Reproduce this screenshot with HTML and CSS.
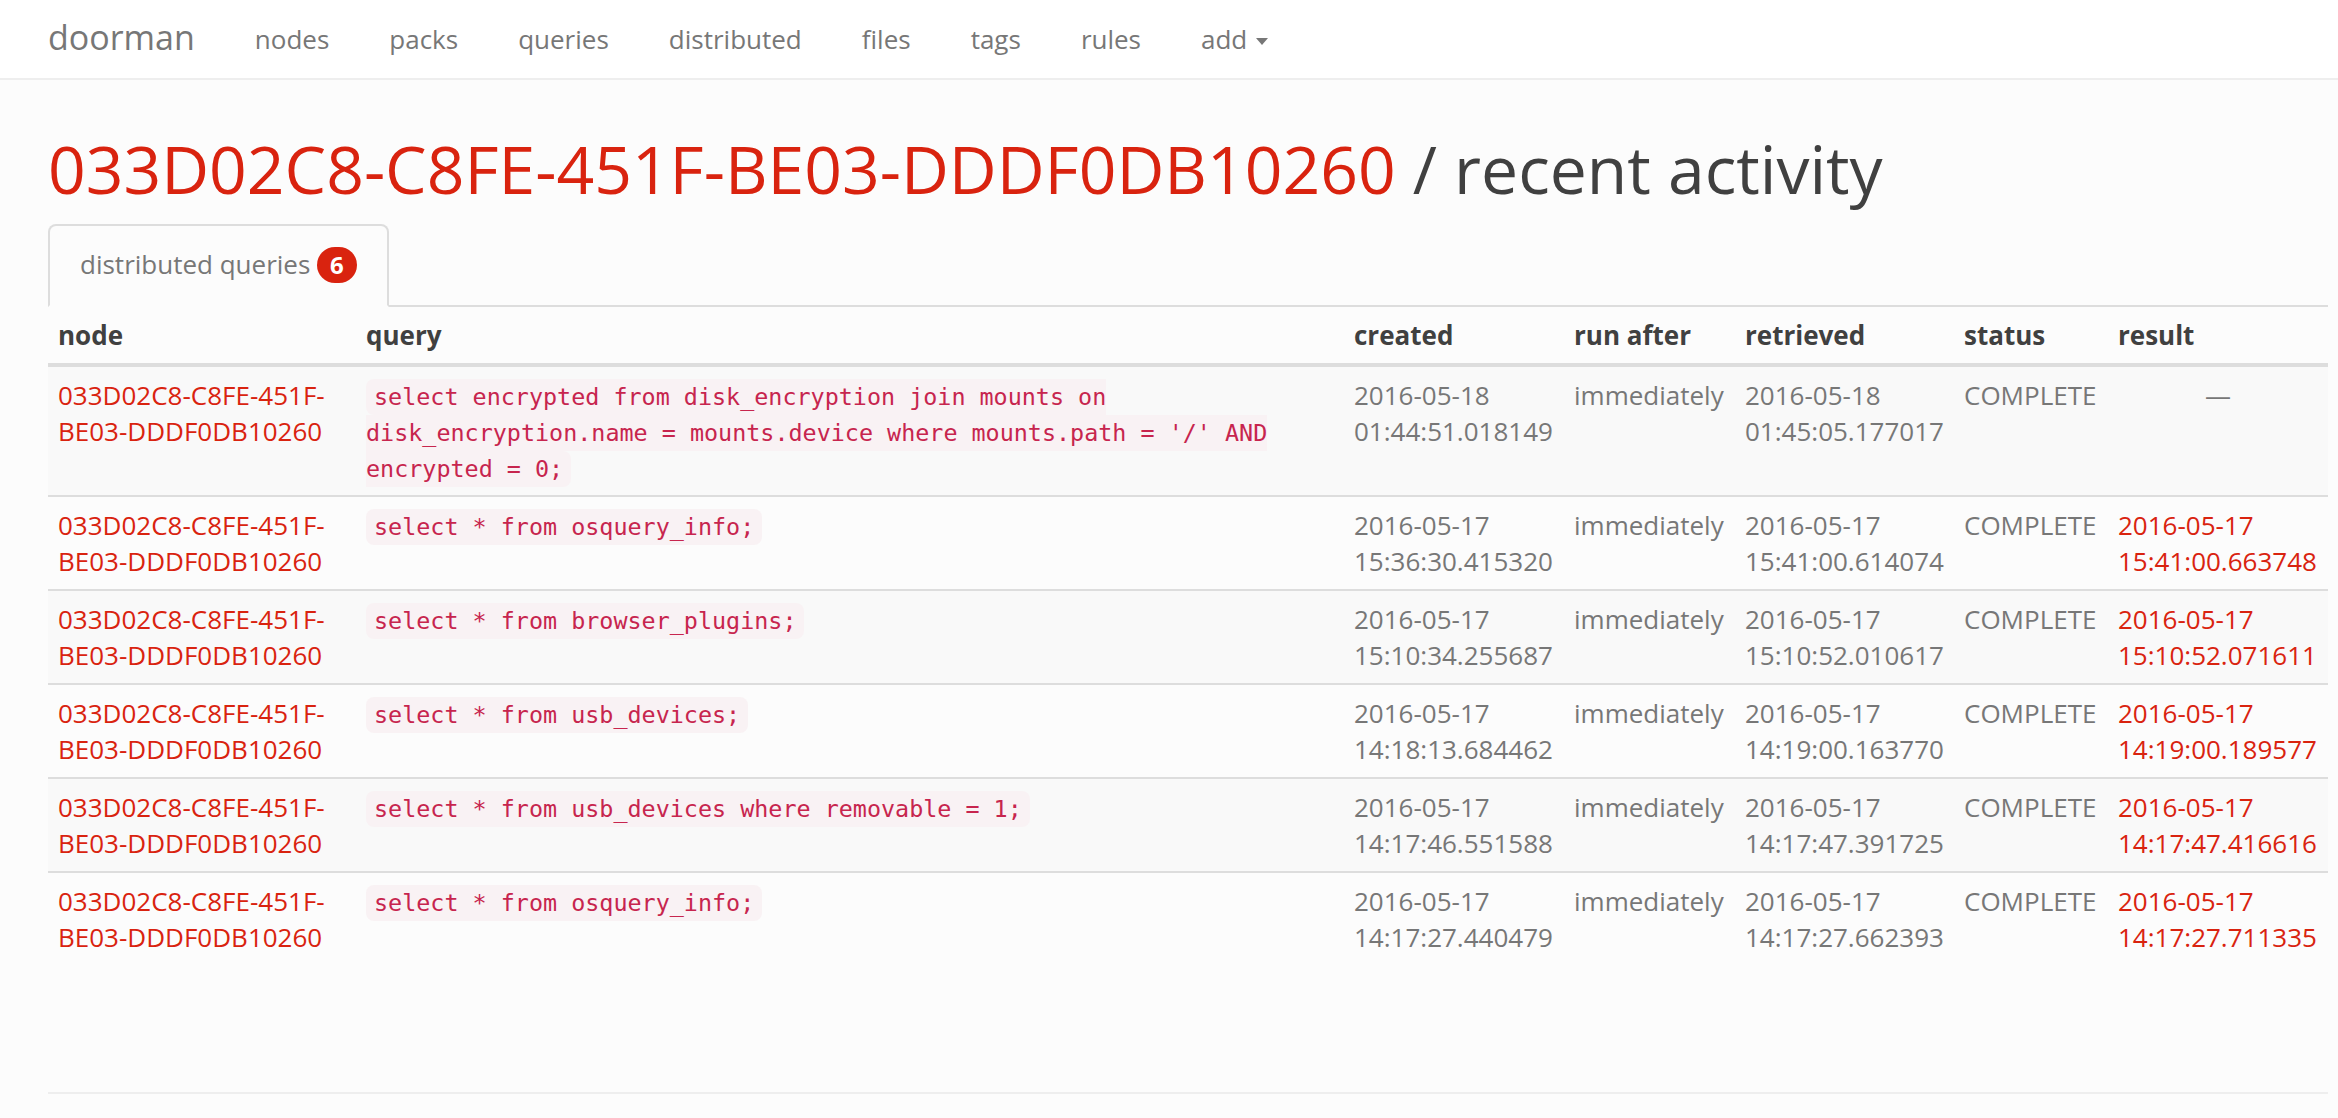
FILE: index.html
```html
<!DOCTYPE html>
<html lang="en">
<head>
<meta charset="utf-8">
<title>doorman - recent activity</title>
<link rel="stylesheet" href="styles.css">
</head>
<body>
<nav class="navbar">
  <a class="brand" href="#">doorman</a>
  <ul class="nav-links">
    <li><a href="#">nodes</a></li>
    <li><a href="#">packs</a></li>
    <li><a href="#">queries</a></li>
    <li><a href="#">distributed</a></li>
    <li><a href="#">files</a></li>
    <li><a href="#">tags</a></li>
    <li><a href="#">rules</a></li>
    <li><a href="#">add <span class="caret"></span></a></li>
  </ul>
</nav>
<main class="container">
  <h1 class="page-title"><a href="#">033D02C8-C8FE-451F-BE03-DDDF0DB10260</a> / recent activity</h1>
  <ul class="tabs">
    <li class="active"><a href="#">distributed queries <span class="badge">6</span></a></li>
  </ul>
  <table class="table">
    <colgroup>
      <col class="c-node"><col class="c-query"><col class="c-created"><col class="c-run"><col class="c-retr"><col class="c-status"><col class="c-result">
    </colgroup>
    <thead>
      <tr><th>node</th><th>query</th><th>created</th><th>run after</th><th>retrieved</th><th>status</th><th>result</th></tr>
    </thead>
    <tbody>
      <tr>
        <td><a href="#">033D02C8-C8FE-451F-BE03-DDDF0DB10260</a></td>
        <td><code>select encrypted from disk_encryption join mounts on disk_encryption.name = mounts.device where mounts.path = '/' AND encrypted = 0;</code></td>
        <td>2016-05-18 01:44:51.018149</td>
        <td>immediately</td>
        <td>2016-05-18 01:45:05.177017</td>
        <td>COMPLETE</td>
        <td class="center">—</td>
      </tr>
      <tr>
        <td><a href="#">033D02C8-C8FE-451F-BE03-DDDF0DB10260</a></td>
        <td><code>select * from osquery_info;</code></td>
        <td>2016-05-17 15:36:30.415320</td>
        <td>immediately</td>
        <td>2016-05-17 15:41:00.614074</td>
        <td>COMPLETE</td>
        <td><a href="#">2016-05-17 15:41:00.663748</a></td>
      </tr>
      <tr>
        <td><a href="#">033D02C8-C8FE-451F-BE03-DDDF0DB10260</a></td>
        <td><code>select * from browser_plugins;</code></td>
        <td>2016-05-17 15:10:34.255687</td>
        <td>immediately</td>
        <td>2016-05-17 15:10:52.010617</td>
        <td>COMPLETE</td>
        <td><a href="#">2016-05-17 15:10:52.071611</a></td>
      </tr>
      <tr>
        <td><a href="#">033D02C8-C8FE-451F-BE03-DDDF0DB10260</a></td>
        <td><code>select * from usb_devices;</code></td>
        <td>2016-05-17 14:18:13.684462</td>
        <td>immediately</td>
        <td>2016-05-17 14:19:00.163770</td>
        <td>COMPLETE</td>
        <td><a href="#">2016-05-17 14:19:00.189577</a></td>
      </tr>
      <tr>
        <td><a href="#">033D02C8-C8FE-451F-BE03-DDDF0DB10260</a></td>
        <td><code>select * from usb_devices where removable = 1;</code></td>
        <td>2016-05-17 14:17:46.551588</td>
        <td>immediately</td>
        <td>2016-05-17 14:17:47.391725</td>
        <td>COMPLETE</td>
        <td><a href="#">2016-05-17 14:17:47.416616</a></td>
      </tr>
      <tr>
        <td><a href="#">033D02C8-C8FE-451F-BE03-DDDF0DB10260</a></td>
        <td><code>select * from osquery_info;</code></td>
        <td>2016-05-17 14:17:27.440479</td>
        <td>immediately</td>
        <td>2016-05-17 14:17:27.662393</td>
        <td>COMPLETE</td>
        <td><a href="#">2016-05-17 14:17:27.711335</a></td>
      </tr>
    </tbody>
  </table>
  <footer class="footer"></footer>
</main>
</body>
</html>
```

FILE: styles.css
```css
html, body {
  margin: 0;
  padding: 0;
}
body {
  background: #fcfcfc;
  color: #777777;
  font-family: "Open Sans", "Liberation Sans", sans-serif;
  font-size: 26px;
  line-height: 36px;
}
a {
  color: #d9230f;
  text-decoration: none;
}

/* navbar */
.navbar {
  display: flex;
  align-items: center;
  height: 78px;
  background: #ffffff;
  border-bottom: 2px solid #eeeeee;
  padding: 0 0 0 48px;
}
.brand {
  color: #777777;
  font-size: 34px;
  line-height: 40px;
  padding: 0 30px 4px 0;
}
.nav-links {
  display: flex;
  list-style: none;
  margin: 0;
  padding: 0;
}
.nav-links a {
  display: block;
  color: #777777;
  line-height: 40px;
  padding: 1px 30px 2px;
}
.caret {
  display: inline-block;
  width: 0;
  height: 0;
  margin-left: 2px;
  vertical-align: middle;
  border-top: 7px solid #777777;
  border-left: 6px solid transparent;
  border-right: 6px solid transparent;
}

/* page */
.container {
  padding: 0 10px 0 48px;
}
.page-title {
  margin: 52px 0 20px;
  font-size: 66px;
  font-weight: 400;
  line-height: 72px;
  color: #404040;
}

/* tabs */
.tabs {
  display: flex;
  list-style: none;
  margin: 0;
  padding: 0;
  border-bottom: 2px solid #dddddd;
}
.tabs li {
  margin-bottom: -2px;
}
.tabs a {
  display: block;
  color: #777777;
  padding: 20px 30px;
  border: 2px solid transparent;
  border-radius: 8px 8px 0 0;
}
.tabs .active a {
  background: #fcfcfc;
  border-color: #dddddd #dddddd transparent;
}
.badge {
  display: inline-block;
  position: relative;
  top: -2px;
  min-width: 12px;
  padding: 6px 13px;
  font-size: 24px;
  font-weight: 700;
  line-height: 24px;
  color: #ffffff;
  text-align: center;
  vertical-align: middle;
  background: #d9230f;
  border-radius: 20px;
}

/* table */
.table {
  width: 100%;
  table-layout: fixed;
  border-collapse: collapse;
  border-spacing: 0;
}
.c-node { width: 308px; }
.c-query { width: 988px; }
.c-created { width: 220px; }
.c-run { width: 171px; }
.c-retr { width: 219px; }
.c-status { width: 154px; }
.c-result { width: 220px; }
.table th {
  text-align: left;
  font-weight: 700;
  color: #404040;
  padding: 10px;
  border-bottom: 4px solid #dddddd;
}
.table td {
  padding: 10px;
  vertical-align: top;
  border-top: 2px solid #dddddd;
}
.table tbody tr:nth-child(odd) {
  background: #f9f9f9;
}
.table td.center {
  text-align: center;
}
code {
  font-family: "DejaVu Sans Mono", "Liberation Mono", monospace;
  font-size: 90%;
  line-height: 20px;
  color: #c7254e;
  background: #f9f2f4;
  padding: 4px 8px;
  border-radius: 8px;
}

.footer {
  margin-top: 127px;
  border-top: 2px solid #eeeeee;
}
```
